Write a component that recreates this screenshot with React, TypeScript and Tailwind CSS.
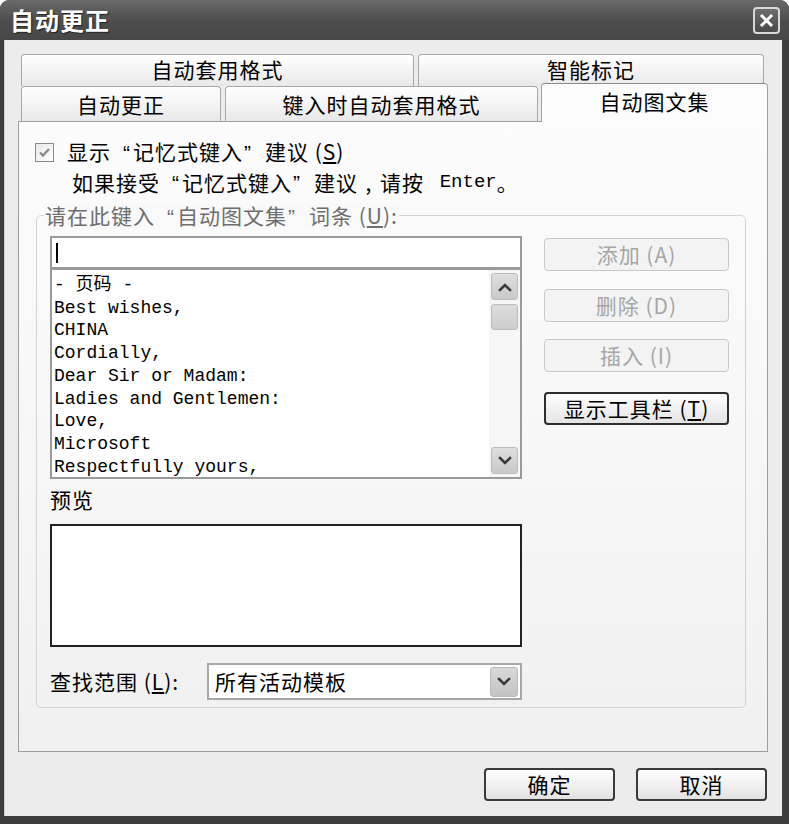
import React from "react";

const CJK = '"Noto Sans CJK SC", "Liberation Sans", sans-serif';
const MONO = '"Liberation Mono", "Noto Sans CJK SC", monospace';
const LAT = '"Liberation Sans", sans-serif';

function LQ() {
  return (
    <span className="inline-block w-[22px] text-right pr-[2px]" style={{ fontFamily: LAT }}>
      “
    </span>
  );
}
function RQ() {
  return (
    <span className="inline-block w-[22px] text-left pl-[1px]" style={{ fontFamily: LAT }}>
      ”
    </span>
  );
}

function Chevron({ up }: { up?: boolean }) {
  return (
    <svg width="14" height="10" viewBox="0 0 14 10">
      <path
        d={up ? "M2 8 L7 3 L12 8" : "M2 2 L7 7 L12 2"}
        stroke="#3a3a3a"
        strokeWidth="2.6"
        fill="none"
        strokeLinecap="square"
      />
    </svg>
  );
}

function ScrollBtn({ up }: { up?: boolean }) {
  return (
    <div className="w-[27px] h-[27px] rounded-[3px] border border-[#bdbdbd] bg-gradient-to-b from-[#dedede] to-[#c9c9c9] flex items-center justify-center">
      <Chevron up={up} />
    </div>
  );
}

function SideBtn({ label, disabled, mt }: { label: React.ReactNode; disabled?: boolean; mt: string }) {
  return (
    <div
      className={
        "w-[185px] h-[33px] rounded-[4px] flex items-center justify-center text-[21px] tracking-[1px] leading-none whitespace-pre " +
        mt +
        (disabled
          ? " border border-[#c8c8c8] bg-[#f3f3f3] text-[#a6a6a6]"
          : " border-2 border-[#2e2e2e] bg-gradient-to-b from-[#ffffff] to-[#e4e4e4] text-black")
      }
    >
      {label}
    </div>
  );
}

const tabCls =
  "rounded-t-[4px] border border-b-0 border-[#a8a8a8] bg-gradient-to-b from-[#ffffff] to-[#e9e9e9] flex items-center justify-center text-[21px] tracking-[1px] leading-none text-black";

export default function App() {
  const items = [
    "- 页码 -",
    "Best wishes,",
    "CHINA",
    "Cordially,",
    "Dear Sir or Madam:",
    "Ladies and Gentlemen:",
    "Love,",
    "Microsoft",
    "Respectfully yours,",
  ];
  return (
    <div
      className="w-[789px] h-[824px] bg-[#3d3d3d] rounded-t-[9px] flex flex-col overflow-hidden"
      style={{ fontFamily: CJK }}
    >
      {/* title bar */}
      <div className="h-[40px] flex items-center justify-between pl-[10px] pr-[9px] bg-gradient-to-b from-[#6a6a6a] via-[#4e4e4e] to-[#474747]">
        <span className="text-white font-bold text-[24px] leading-none tracking-[1px] [text-shadow:1px_1px_1px_#222]">
          自动更正
        </span>
        <div className="w-[27px] h-[27px] rounded-[4px] border-2 border-[#d8d8d8] bg-gradient-to-b from-[#6e6e6e] to-[#4a4a4a] flex items-center justify-center mt-[1px]">
          <svg width="15" height="15" viewBox="0 0 15 15">
            <path d="M3 3 L12 12 M12 3 L3 12" stroke="#ffffff" strokeWidth="3" strokeLinecap="square" />
          </svg>
        </div>
      </div>

      {/* body */}
      <div className="flex-1 ml-[4px] mr-[7px] mb-[8px] bg-[#ececec] flex flex-col border-l border-[#cfcfcf]">
        {/* tabs */}
        <div className="pt-[14px] flex flex-col">
          <div className="flex gap-[4px] ml-[16px] h-[32px]">
            <div className={"w-[393px] h-[32px] pb-[3px] " + tabCls}>自动套用格式</div>
            <div className={"w-[346px] h-[32px] pb-[3px] " + tabCls}>智能标记</div>
          </div>
          <div className="flex items-end ml-[16px] h-[35px]">
            <div className={"w-[200px] h-[35px] " + tabCls}>自动更正</div>
            <div className={"w-[313px] h-[35px] ml-[4px] " + tabCls}>键入时自动套用格式</div>
            <div className="w-[227px] h-[39px] ml-[3px] -mb-px relative z-10 rounded-t-[4px] border border-b-0 border-[#a0a0a0] border-t-[#8a8a8a] bg-[#fcfcfc] flex items-start pt-[7px] justify-center text-[21px] tracking-[1px] leading-none text-black">
              自动图文集
            </div>
          </div>
        </div>

        {/* panel */}
        <div className="ml-[13px] w-[750px] h-[631px] border border-[#9e9e9e] bg-gradient-to-b from-[#fcfcfc] via-[#f7f7f7] to-[#f0f0f0] flex flex-col">
          <div className="mt-[16px] h-[28px] flex items-center pl-[16px]">
            <div className="w-[19px] h-[19px] border border-[#8a8a8a] bg-gradient-to-br from-[#e8e8e8] to-[#ffffff] flex items-center justify-center">
              <svg width="13" height="11" viewBox="0 0 13 11">
                <path d="M2 5.5 L5 8.5 L11 2" stroke="#8a8a8a" strokeWidth="2.4" fill="none" />
              </svg>
            </div>
            <span className="ml-[13px] text-[21px] tracking-[1px] leading-none text-black whitespace-pre">
              显示<LQ />记忆式键入<RQ />建议 (<span className="underline underline-offset-2">S</span>)
            </span>
          </div>
          <div className="mt-[2px] h-[28px] flex items-center pl-[53px] text-[21px] tracking-[1px] leading-none text-black whitespace-pre">
            如果接受<LQ />记忆式键入<RQ />建议<span className="inline-block w-[22px] text-center">,</span>请按 <span style={{ fontFamily: MONO }} className="ml-[10px] text-[19px] tracking-normal">Enter</span>。
          </div>

          {/* group box */}
          <div className="relative mt-[19px] ml-[17px] w-[710px] h-[493px] border border-[#d3d3d3] rounded-[5px] flex pl-[13px] pt-[20px]">
            <span className="absolute -top-[13px] left-[7px] px-[1px] bg-[#f9f9f9] text-[21px] tracking-[1px] leading-[24px] text-[#6e6e6e] whitespace-pre">
              请在此键入<LQ />自动图文集<RQ />词条 (<span className="underline underline-offset-2">U</span>):
            </span>

            {/* left column */}
            <div className="w-[472px] flex flex-col">
              <div className="h-[33px] border-2 border-[#9a9a9a] bg-white flex items-center pl-[4px]">
                <div className="w-[2px] h-[20px] bg-black" />
              </div>
              <div className="h-[211px] -mt-[1px] border-2 border-[#9a9a9a] bg-white flex">
                <div
                  className="flex-1 pl-[2px] pt-[4px] text-[18px] leading-[22.7px] text-black whitespace-pre"
                  style={{ fontFamily: MONO }}
                >
                  {items.map((t) => (
                    <div key={t}>{t}</div>
                  ))}
                </div>
                <div className="w-[31px] bg-[#f6f6f6] flex flex-col items-center pt-[3px] pb-[3px]">
                  <ScrollBtn up />
                  <div className="mt-[4px] w-[27px] h-[26px] rounded-[3px] border border-[#bdbdbd] bg-gradient-to-b from-[#dcdcdc] to-[#cdcdcd]" />
                  <div className="flex-1" />
                  <ScrollBtn />
                </div>
              </div>
              <div className="mt-[6px] h-[28px] flex items-center text-[21px] tracking-[1px] leading-none text-black">预览</div>
              <div className="mt-[11px] h-[123px] border-2 border-[#222222] bg-white" />
              <div className="mt-[16px] h-[37px] flex items-center">
                <span className="w-[157px] text-[21px] tracking-[1px] leading-none text-black whitespace-pre">
                  查找范围 (<span className="underline underline-offset-2">L</span>):
                </span>
                <div className="w-[315px] h-[37px] border-2 border-[#a8a8a8] bg-white flex items-center pl-[6px] pr-[2px]">
                  <span className="flex-1 text-[21px] tracking-[1px] leading-none text-black">所有活动模板</span>
                  <div className="w-[28px] h-[30px] rounded-[3px] bg-gradient-to-b from-[#d8d8d8] to-[#c4c4c4] border border-[#bcbcbc] flex items-center justify-center">
                    <Chevron />
                  </div>
                </div>
              </div>
            </div>

            {/* right column */}
            <div className="ml-[22px] flex flex-col">
              <SideBtn mt="mt-[2px]" disabled label={<>添加 (A)</>} />
              <SideBtn mt="mt-[18px]" disabled label={<>删除 (D)</>} />
              <SideBtn mt="mt-[17px]" disabled label={<>插入 (I)</>} />
              <SideBtn
                mt="mt-[20px]"
                label={
                  <>
                    显示工具栏 (<span className="underline underline-offset-2">T</span>)
                  </>
                }
              />
            </div>
          </div>
        </div>

        {/* bottom buttons */}
        <div className="flex justify-end gap-[21px] pr-[15px] mt-[16px]">
          <div className="w-[131px] h-[33px] rounded-[4px] border-2 border-[#3a3a3a] bg-gradient-to-b from-[#ffffff] to-[#e2e2e2] flex items-center justify-center text-[21px] tracking-[1px] leading-none text-black">
            确定
          </div>
          <div className="w-[131px] h-[33px] rounded-[4px] border-2 border-[#3a3a3a] bg-gradient-to-b from-[#ffffff] to-[#e2e2e2] flex items-center justify-center text-[21px] tracking-[1px] leading-none text-black">
            取消
          </div>
        </div>
      </div>
    </div>
  );
}
